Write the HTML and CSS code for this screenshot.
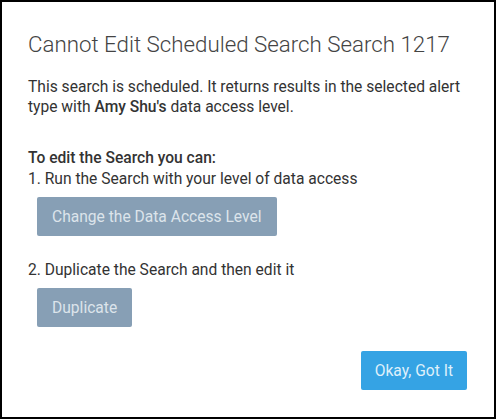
FILE: index.html
```html
<!DOCTYPE html>
<html>
<head>
<meta charset="utf-8">
<link rel="stylesheet" href="styles.css">
</head>
<body>
<div class="modal">
  <h1 class="title">Cannot Edit Scheduled Search Search 1217</h1>
  <p class="intro">This search is scheduled. It returns results in the selected alert type with <strong>Amy Shu's</strong> data access level.</p>
  <div class="options">
    <div class="lead">To edit the Search you can:</div>
    <div class="step">1. Run the Search with your level of data access</div>
    <button class="btn btn-muted btn-first">Change the Data Access Level</button>
    <div class="step step-2">2. Duplicate the Search and then edit it</div>
    <button class="btn btn-muted">Duplicate</button>
  </div>
  <div class="footer">
    <button class="btn btn-primary">Okay, Got It</button>
  </div>
</div>
</body>
</html>
```

FILE: styles.css
```css
* { box-sizing: border-box; }
html, body { margin: 0; padding: 0; }
body {
  width: 496px;
  height: 419px;
  background: #000;
  padding: 2px;
  font-family: Roboto, "Liberation Sans", sans-serif;
}
.modal {
  background: #fff;
  height: 100%;
  padding: 29px 26px 0 26px;
  color: #333;
}
.title {
  margin: 0;
  font-weight: 300;
  font-size: 22.3px;
  line-height: 26px;
  color: #444;
}
.intro {
  margin: 20px 0 0 0;
  font-size: 15.6px;
  line-height: 20px;
}
.intro strong { font-weight: 500; }
.options {
  margin-top: 31px;
  display: flex;
  flex-direction: column;
  align-items: flex-start;
  font-size: 15.6px;
  line-height: 21px;
}
.lead { font-weight: 500; }
.btn {
  border: none;
  border-radius: 2px;
  font-family: Roboto, "Liberation Sans", sans-serif;
  font-size: 15.6px;
  height: 39px;
  padding: 0 15px;
  cursor: pointer;
}
.btn-muted {
  background: #879fb5;
  color: #dce4eb;
  margin: 7px 0 0 9px;
}
.step-2 { margin-top: 24px; }
.btn-primary {
  background: #35a3e4;
  color: #dff0fb;
  padding: 0 14px;
}
.footer {
  display: flex;
  justify-content: flex-end;
  margin-top: 24px;
  padding-right: 1px;
}
```
